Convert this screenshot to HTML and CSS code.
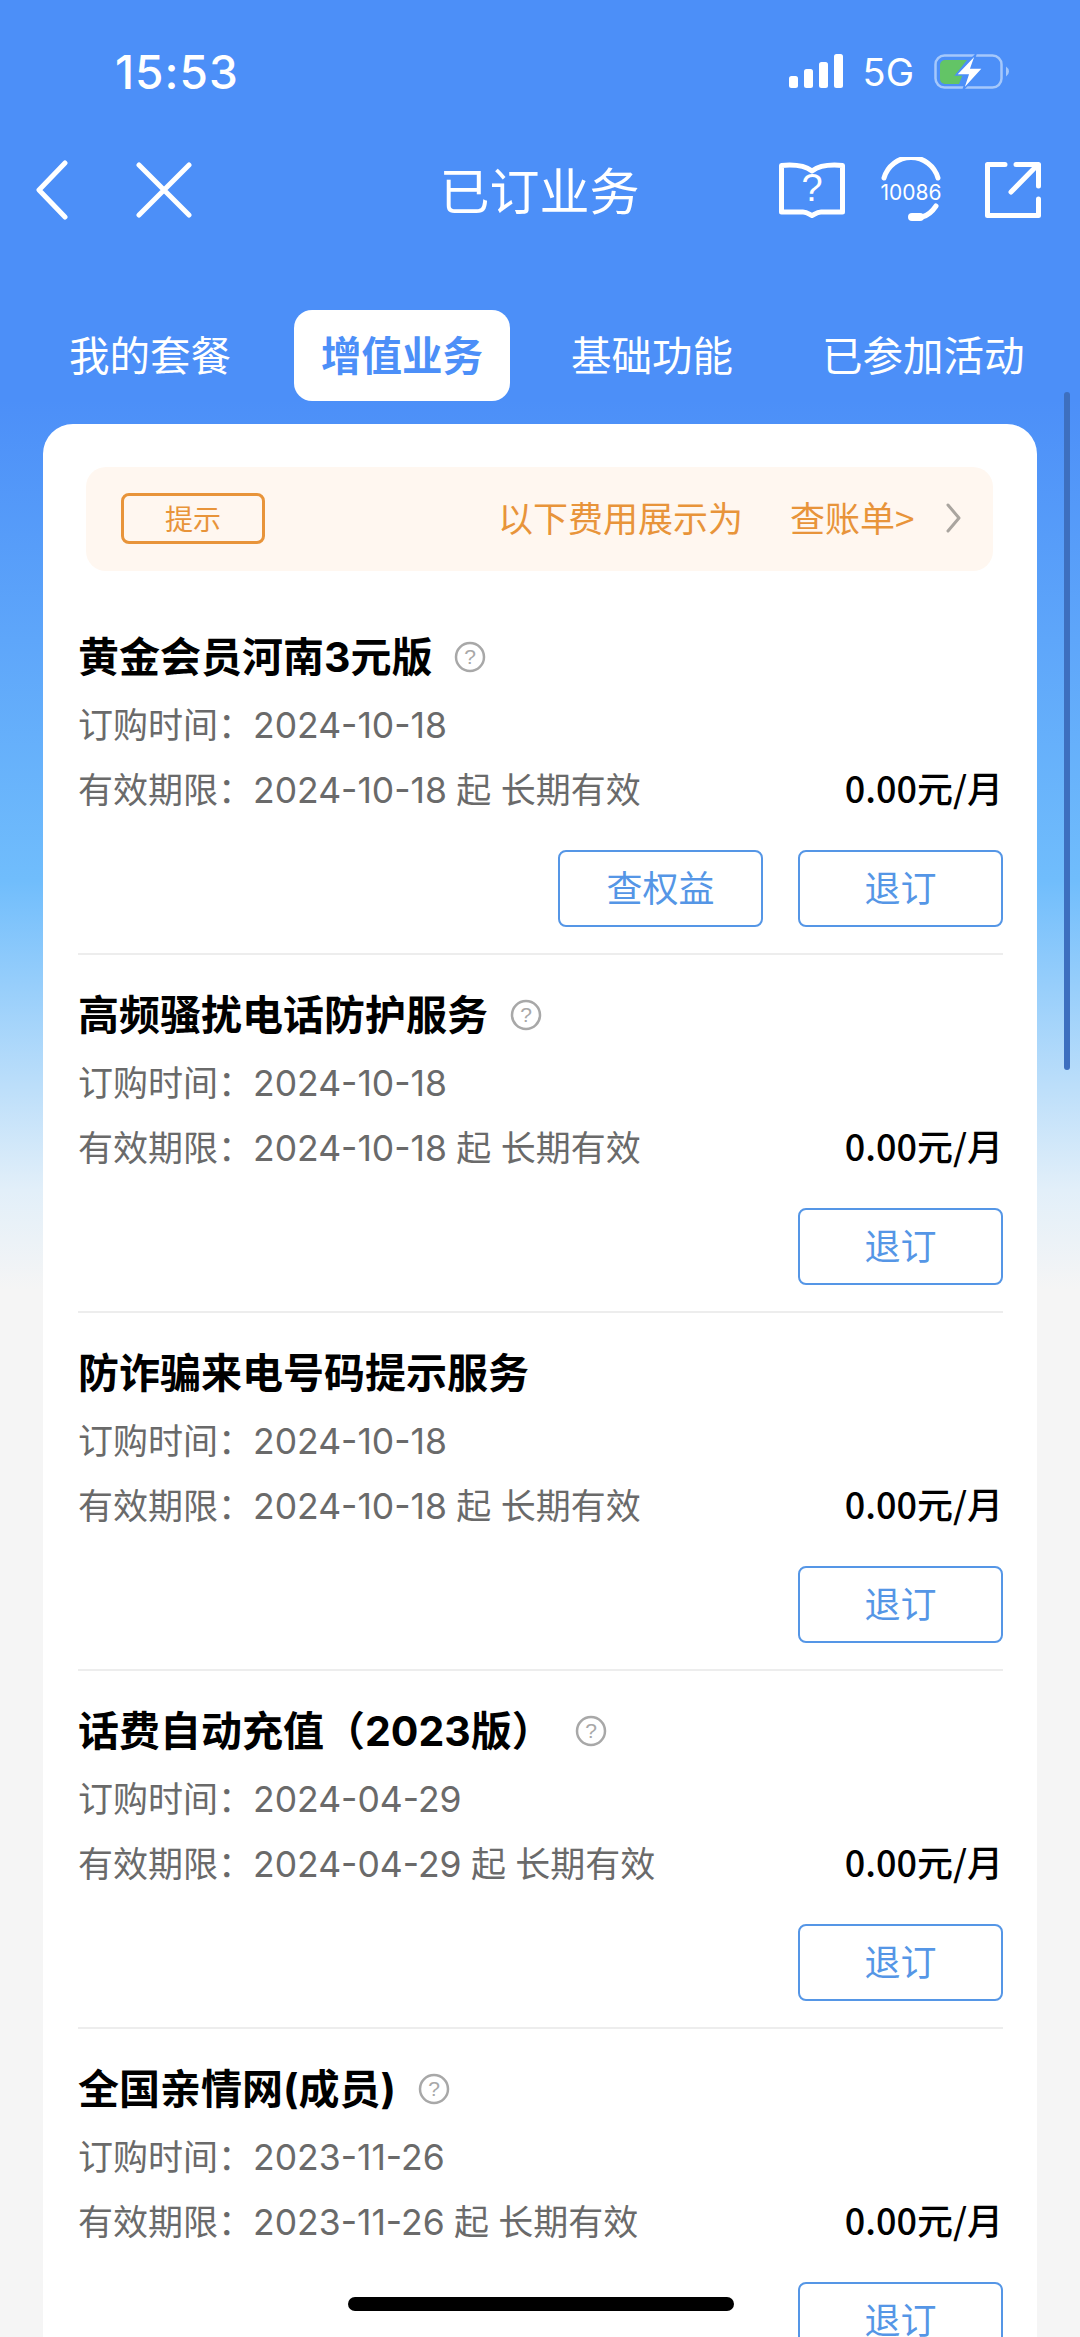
FILE: index.html
```html
<!DOCTYPE html>
<html lang="zh">
<head>
<meta charset="utf-8">
<title>已订业务</title>
<link rel="stylesheet" href="styles.css">
</head>
<body>
<div class="page">
  <header class="status">
    <span class="time">15:53</span>
    <div class="status-right">
      <svg class="signal" width="54" height="36" viewBox="0 0 54 36"><rect x="0" y="22" width="9" height="12" rx="2.5"/><rect x="15" y="15" width="9" height="19" rx="2.5"/><rect x="30" y="8" width="9" height="26" rx="2.5"/><rect x="45" y="0" width="9" height="34" rx="2.5"/></svg>
      <span class="net">5G</span>
      <svg class="battery" width="76" height="38" viewBox="0 0 76 38"><rect x="1.5" y="2.5" width="66" height="32" rx="9" fill="none" stroke="#a5c8fb" stroke-width="2.5"/><path d="M72 13.5q3 2 3 5t-3 5z" fill="#a5c8fb"/><path d="M6 12a5 5 0 0 1 5-5h22l-11 14h7l-4 10H11a5 5 0 0 1-5-5z" fill="#63c466"/><path d="M42 1 22 22h12l-5 15 20-22H37z" fill="#fff" stroke="#4c8ff8" stroke-width="1.5"/></svg>
    </div>
  </header>

  <nav class="navbar">
    <div class="nav-left">
      <svg width="36" height="60" viewBox="0 0 36 60" class="ico"><path d="M31 3 5 30l26 27"/></svg>
      <svg width="56" height="56" viewBox="0 0 56 56" class="ico"><path d="M3 3l50 50M53 3 3 53"/></svg>
    </div>
    <h1 class="nav-title">已订业务</h1>
    <div class="nav-right">
      <svg width="66" height="56" viewBox="0 0 66 56" class="ico book"><path d="M2.500 3.500C13 2.500 25 3 33 9 41 3 53 2.500 63.500 3.500V50H42c-4 0-6 2-9 3.500C30 52 28 50 24 50H2.500z"/><text x="33" y="39" class="book-q">?</text></svg>
      <svg width="66" height="66" viewBox="0 0 66 66" class="ico"><path d="M6 21A28 28 0 0 1 60 21"/><path d="M58 49Q52 58 44 60"/><path d="M34 60h8" stroke-width="8"/><text x="33" y="43" class="headset-num">10086</text></svg>
      <svg width="56" height="56" viewBox="0 0 56 56" class="ico share"><path d="M20 2.500H2.500v51h51V37"/><path d="M26 30 53 2.500M31 2.500h22.500V24"/></svg>
    </div>
  </nav>

  <div class="tabs">
    <span class="tab">我的套餐</span>
    <span class="tab tab-active">增值业务</span>
    <span class="tab">基础功能</span>
    <span class="tab">已参加活动</span>
  </div>

  <main class="card">
    <div class="notice">
      <span class="notice-tag">提示</span>
      <div class="notice-scroll">以下费用展示为</div>
      <span class="notice-link">查账单&gt;</span>
      <svg class="notice-chev" width="16" height="30" viewBox="0 0 16 30"><path d="M2 2l11 13L2 28"/></svg>
    </div>

    <section class="item">
      <div class="item-title"><h2>黄金会员河南3元版</h2><svg class="help" width="32" height="32" viewBox="0 0 32 32"><circle cx="16" cy="16" r="14"/><text x="16" y="23" class="help-q">?</text></svg></div>
      <p class="line">订购时间：<span class="mono">2024-10-18</span></p>
      <div class="line line-row"><p>有效期限：<span class="mono">2024-10-18</span> 起 长期有效</p><b class="price">0.00元/月</b></div>
      <div class="actions"><button class="btn">查权益</button><button class="btn">退订</button></div>
    </section>

    <section class="item">
      <div class="item-title"><h2>高频骚扰电话防护服务</h2><svg class="help" width="32" height="32" viewBox="0 0 32 32"><circle cx="16" cy="16" r="14"/><text x="16" y="23" class="help-q">?</text></svg></div>
      <p class="line">订购时间：<span class="mono">2024-10-18</span></p>
      <div class="line line-row"><p>有效期限：<span class="mono">2024-10-18</span> 起 长期有效</p><b class="price">0.00元/月</b></div>
      <div class="actions"><button class="btn">退订</button></div>
    </section>

    <section class="item">
      <div class="item-title"><h2>防诈骗来电号码提示服务</h2></div>
      <p class="line">订购时间：<span class="mono">2024-10-18</span></p>
      <div class="line line-row"><p>有效期限：<span class="mono">2024-10-18</span> 起 长期有效</p><b class="price">0.00元/月</b></div>
      <div class="actions"><button class="btn">退订</button></div>
    </section>

    <section class="item">
      <div class="item-title"><h2>话费自动充值（2023版）</h2><svg class="help" width="32" height="32" viewBox="0 0 32 32"><circle cx="16" cy="16" r="14"/><text x="16" y="23" class="help-q">?</text></svg></div>
      <p class="line">订购时间：<span class="mono">2024-04-29</span></p>
      <div class="line line-row"><p>有效期限：<span class="mono">2024-04-29</span> 起 长期有效</p><b class="price">0.00元/月</b></div>
      <div class="actions"><button class="btn">退订</button></div>
    </section>

    <section class="item">
      <div class="item-title"><h2>全国亲情网(成员)</h2><svg class="help" width="32" height="32" viewBox="0 0 32 32"><circle cx="16" cy="16" r="14"/><text x="16" y="23" class="help-q">?</text></svg></div>
      <p class="line">订购时间：<span class="mono">2023-11-26</span></p>
      <div class="line line-row"><p>有效期限：<span class="mono">2023-11-26</span> 起 长期有效</p><b class="price">0.00元/月</b></div>
      <div class="actions"><button class="btn">退订</button></div>
    </section>
  </main>

  <div class="scrollbar"></div>
  <div class="home-bar"></div>
</div>
</body>
</html>
```

FILE: styles.css
```css
* { box-sizing: border-box; }
html, body { margin: 0; padding: 0; }
body { font-family: "Liberation Sans", "Noto Sans CJK SC", sans-serif; }
h1, h2, p { margin: 0; font-weight: 400; }

.page {
  position: relative;
  width: 1080px;
  height: 2337px;
  overflow: hidden;
  background: linear-gradient(180deg, #4c8ff8 0, #4c8ff8 400px, #70bdfc 880px, #e2eff9 1190px, #f5f5f5 1290px, #f5f5f5 100%);
}

.status {
  height: 145px;
  padding: 44px 70px 0 115px;
  display: flex;
  justify-content: space-between;
  align-items: flex-start;
  color: #fff;
}
.time { font-size: 46px; font-weight: 500; line-height: 56px; letter-spacing: 1px; font-family: Inter, "Liberation Sans", sans-serif; }
.status-right { display: flex; align-items: center; gap: 20px; height: 56px; }
.signal { fill: #fff; }
.net { font-size: 38px; line-height: 40px; font-family: Inter, "Liberation Sans", sans-serif; }

.navbar {
  height: 90px;
  padding: 0 39px 0 34px;
  display: flex;
  align-items: center;
  color: #fff;
}
.nav-left { display: flex; align-items: center; gap: 66px; flex: 1; }
.nav-title { font-size: 50px; line-height: 60px; margin: 0 0 5px 4px; font-family: "Noto Sans CJK SC", sans-serif; }
.nav-right { display: flex; align-items: center; justify-content: flex-end; gap: 30px; flex: 1; }
.ico { fill: none; stroke: #fff; stroke-width: 5; stroke-linecap: round; stroke-linejoin: round; }
.book { margin-right: 3px; }
.share { margin-left: 11px; }
.book-q { fill: #fff; stroke: none; font-size: 38px; text-anchor: middle; font-family: "Liberation Sans", sans-serif; }
.headset-num { fill: #fff; stroke: none; font-size: 21px; text-anchor: middle; font-family: Inter, "Liberation Sans", sans-serif; }

.tabs {
  margin-top: 75px;
  height: 91px;
  padding-left: 43px;
  display: flex;
  align-items: center;
  gap: 37px;
}
.tab {
  font-size: 40.500px;
  line-height: 87px;
  color: #fff;
  padding: 0 26px 4px;
  font-family: "Noto Sans CJK SC", sans-serif;
  white-space: nowrap;
}
.tab-active {
  padding: 0 27px 4px;
  margin-right: -2px;
  background: #fff;
  color: #4c8ff8;
  font-weight: 700;
  border-radius: 18px;
}

.card {
  margin: 23px 43px 0;
  width: 994px;
  background: #fff;
  border-radius: 30px;
  padding: 43px 34px 0 35px;
}

.notice {
  margin: 0 8px;
  width: 907px;
  height: 104px;
  padding: 0 32px 0 35px;
  background: #fff7f0;
  border-radius: 20px;
  display: flex;
  align-items: center;
  color: #e8943a;
  font-family: "Noto Sans CJK SC", sans-serif;
}
.notice-tag {
  width: 144px;
  height: 51px;
  margin-bottom: 2px;
  border: 3px solid #e8943a;
  border-radius: 8px;
  text-align: center;
  font-size: 28px;
  line-height: 45px;
  flex: none;
}
.notice-scroll {
  width: 245px;
  margin: 0 0 5px 233px;
  white-space: nowrap;
  font-size: 35px;
  flex: none;
}
.notice-link { margin: 0 0 5px 47px; font-size: 35px; flex: none; }
.notice-chev { margin: 0 0 2px 32px; fill: none; stroke: #aaa59f; stroke-width: 3; stroke-linecap: round; stroke-linejoin: round; flex: none; }

.item {
  padding-bottom: 26px;
  border-bottom: 2px solid #ededed;
}
.item:first-of-type { padding-top: 26px; }
.item:last-child { border-bottom: 0; }

.item-title {
  display: flex;
  align-items: center;
  gap: 22px;
  height: 60px;
  margin-top: 30px;
}
.item-title h2 {
  font-family: Inter, "Noto Sans CJK SC", sans-serif;
  font-size: 41px;
  font-weight: 700;
  color: #000;
  line-height: 60px;
}
.help { fill: none; stroke: #a8a8a8; stroke-width: 2.5; flex: none; }
.help-q { fill: #a8a8a8; stroke: none; font-size: 21px; text-anchor: middle; font-family: "Liberation Sans", sans-serif; }

.line {
  font-family: "Noto Sans CJK SC", sans-serif;
  font-size: 35px;
  height: 50px;
  line-height: 48px;
  color: #6a6a6a;
  margin-top: 12px;
  word-spacing: 1.500px;
  white-space: nowrap;
}
.line-row { margin-top: 14px; display: flex; justify-content: space-between; align-items: baseline; }
.mono { font-family: Inter, "Noto Sans CJK SC", sans-serif; font-size: 35.500px; }
.price { font-size: 36px; color: #000; font-weight: 500; }

.actions {
  display: flex;
  justify-content: flex-end;
  gap: 35px;
  margin-top: 37px;
}
.btn {
  width: 205px;
  height: 77px;
  border: 2px solid #5596e6;
  border-radius: 8px;
  background: #fff;
  color: #5596e6;
  font-family: "Noto Sans CJK SC", sans-serif;
  font-size: 36px;
  padding: 0 0 5px;
}

.scrollbar {
  position: absolute;
  left: 1064px;
  top: 392px;
  width: 6px;
  height: 678px;
  background: #3d6fbf;
  border-radius: 3px;
}
.home-bar {
  position: absolute;
  left: 348px;
  top: 2297px;
  width: 386px;
  height: 14px;
  background: #000;
  border-radius: 7px;
}
```
